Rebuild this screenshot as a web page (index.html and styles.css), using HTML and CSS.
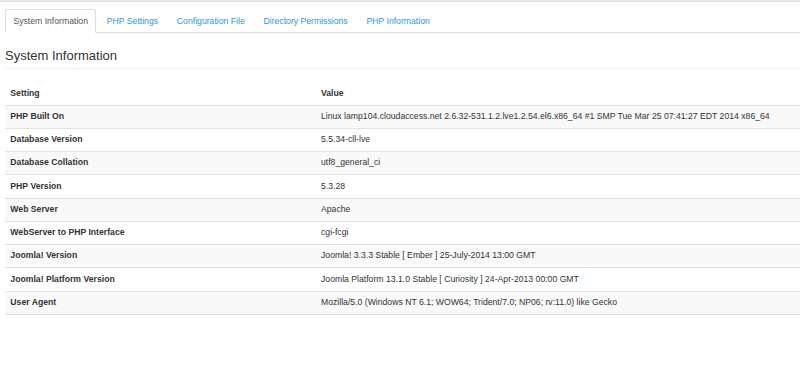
FILE: index.html
```html
<!DOCTYPE html>
<html>
<head>
<meta charset="utf-8">
<link rel="stylesheet" href="styles.css">
</head>
<body>
<div class="page">
  <ul class="tabs">
    <li class="tab active"><a>System Information</a></li>
    <li class="tab"><a>PHP Settings</a></li>
    <li class="tab"><a>Configuration File</a></li>
    <li class="tab"><a>Directory Permissions</a></li>
    <li class="tab"><a>PHP Information</a></li>
  </ul>
  <h2 class="title">System Information</h2>
  <table class="info">
    <thead>
      <tr><th class="c1">Setting</th><th>Value</th></tr>
    </thead>
    <tbody>
      <tr><td class="c1">PHP Built On</td><td>Linux lamp104.cloudaccess.net 2.6.32-531.1.2.lve1.2.54.el6.x86_64 #1 SMP Tue Mar 25 07:41:27 EDT 2014 x86_64</td></tr>
      <tr><td class="c1">Database Version</td><td>5.5.34-cll-lve</td></tr>
      <tr><td class="c1">Database Collation</td><td>utf8_general_ci</td></tr>
      <tr><td class="c1">PHP Version</td><td>5.3.28</td></tr>
      <tr><td class="c1">Web Server</td><td>Apache</td></tr>
      <tr><td class="c1">WebServer to PHP Interface</td><td>cgi-fcgi</td></tr>
      <tr><td class="c1">Joomla! Version</td><td>Joomla! 3.3.3 Stable [ Ember ] 25-July-2014 13:00 GMT</td></tr>
      <tr><td class="c1">Joomla! Platform Version</td><td>Joomla Platform 13.1.0 Stable [ Curiosity ] 24-Apr-2013 00:00 GMT</td></tr>
      <tr><td class="c1">User Agent</td><td>Mozilla/5.0 (Windows NT 6.1; WOW64; Trident/7.0; NP06; rv:11.0) like Gecko</td></tr>
    </tbody>
  </table>
</div>
</body>
</html>
```

FILE: styles.css
```css
html, body {
  margin: 0;
  padding: 0;
  background: #fff;
}
body {
  font-family: "Liberation Sans", Arial, Helvetica, sans-serif;
  font-size: 8.67px;
  line-height: 12px;
  color: #333;
  border-top: 2px solid #e2e2e2;
}
.page {
  padding: 7px 0 0 5px;
}
.tabs {
  list-style: none;
  margin: 0;
  padding: 0;
  display: flex;
  border-bottom: 1px solid #ddd;
}
.tab {
  margin-right: 2px;
  margin-bottom: -1px;
}
.tab a {
  display: block;
  padding: 5px 7.4px 5px 7.4px;
  border: 1px solid transparent;
  border-radius: 3px 3px 0 0;
  color: #2f96d8;
  line-height: 12px;
}
.tab.active a {
  color: #555;
  background: #fff;
  border-color: #ddd #ddd transparent #ddd;
}
.title {
  margin: 0;
  padding: 15px 0 5px 0;
  font-size: 13px;
  line-height: 15px;
  font-weight: normal;
  color: #333;
  border-bottom: 1px solid #eee;
}
.info {
  margin-top: 13px;
  width: 100%;
  border-collapse: collapse;
}
.info th, .info td {
  text-align: left;
  padding: 5.33px 5.33px;
  line-height: 12px;
  vertical-align: top;
}
.info th {
  font-weight: bold;
  border-bottom: 1.5px solid #ddd;
}
.info td {
  border-top: 1px solid #e2e2e2;
  line-height: 11.6px;
}
.info td.c1 {
  font-weight: bold;
}
.info .c1 {
  width: 300px;
}
.info tbody tr:nth-child(odd) td {
  background: #f9f9f9;
}
.info tbody tr:last-child td {
  border-bottom: 1px solid #e2e2e2;
}
```
